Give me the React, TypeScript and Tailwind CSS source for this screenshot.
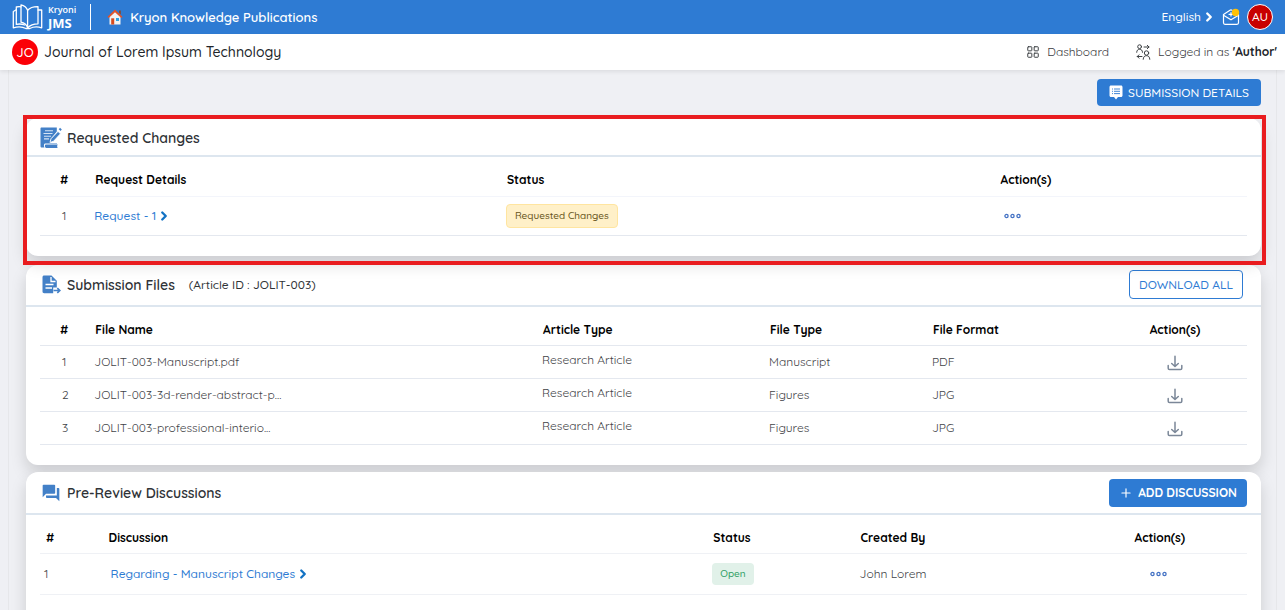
import { type ReactNode } from "react";
import { ChevronRight, LayoutGrid, Plus } from "lucide-react";
import { MdForum } from "react-icons/md";

function LogoIcon() {
  return (
    <svg viewBox="0 0 32 26" className="h-[26px] w-8 shrink-0" fill="none" stroke="#fff" strokeWidth="1.3" strokeLinejoin="round" strokeLinecap="round" aria-hidden="true">
      <path d="M9 .8v17.400c3.600.8 5.600 2.700 6.600 5.600V6.200C14.600 3.400 12.600 1.500 9 .8z" />
      <path d="M15.600 6.200c2.400-2.700 5.600-3.700 10.400-3.600v17.200c-4.600 0-7.800 1.200-10.400 4" />
      <path d="M9 2.800C7 2.600 5.600 2.700 4.300 3v17.400c3-.7 5.800-.4 8.300.6" />
      <path d="M4.300 5.800 1.300 7.500v16.300c4.700-1.300 9-1.200 12.600.7h3.800c3.600-1.800 7.700-2 12-.7V6h-3.600" />
    </svg>
  );
}

function HouseIcon() {
  return (
    <svg viewBox="0 0 16 16" className="size-4" aria-hidden="true">
      <path d="M2.500 7.500 8 2.500l5.500 5V15.500h-11z" fill="#f2f2f2" />
      <path d="M12 1.500h1.800v4L12 4z" fill="#8a4a2a" />
      <path d="M8 .5.500 7.800l1.200 1.200L8 3.200 14.300 9l1.200-1.200z" fill="#e0542a" />
      <path d="M4.200 9.300h3v6.200h-3z" fill="#d5491d" />
      <path d="M9 9h3v3H9z" fill="#2aa3e6" />
    </svg>
  );
}

function MailIcon() {
  return (
    <svg viewBox="0 0 18 18" className="size-[18px]" fill="none" stroke="#fff" strokeWidth="1.200" strokeLinejoin="round" strokeLinecap="round" aria-hidden="true">
      <path d="M1.500 6.500v8.300c0 .9.600 1.500 1.500 1.500h12c.9 0 1.500-.6 1.500-1.500V6.500" />
      <path d="M1.500 7.200 9 11.800l7.500-4.600" />
      <path d="M1.500 6.500 8 2.300c.6-.4 1.400-.4 2 0" />
      <path d="M7 6.300h4M9 4.500v3.600" />
      <circle cx="13.500" cy="4.500" r="3.700" fill="#ffc107" stroke="none" />
    </svg>
  );
}

function SwitchUserIcon() {
  return (
    <svg viewBox="0 0 15 16" className="h-4 w-[15px]" fill="none" stroke="#3c4043" strokeWidth="1" strokeLinejoin="round" strokeLinecap="round" aria-hidden="true">
      <circle cx="3.600" cy="2.700" r="1.900" />
      <path d="M.7 8.300c0-2 1.200-3 2.900-3s2.900 1 2.900 3" />
      <circle cx="10.500" cy="9" r="2.200" />
      <path d="M7.200 15.300c.1-2.500 1.400-3.600 3.300-3.600s3.200 1.100 3.300 3.600" />
      <path d="M8 3h5M11.300 1.300 13 3l-1.700 1.700M6 12.500H1.300M3 10.800l-1.700 1.700L3 14.200" />
    </svg>
  );
}

function NoteIcon() {
  return (
    <svg viewBox="0 0 14 15" className="h-[15px] w-3.5" aria-hidden="true">
      <path d="M2 .5h10c.9 0 1.500.6 1.500 1.500v8.600c0 .9-.6 1.500-1.500 1.500H9L7 14.500l-2-2.400H2c-.9 0-1.500-.6-1.500-1.500V2C.5 1.100 1.100.5 2 .5z" fill="#fff" />
      <path d="M3 4h1M5 4h6M3 6.300h1M5 6.300h6M3 8.600h1M5 8.600h6" stroke="#2e7bd3" strokeWidth=".9" />
    </svg>
  );
}

function RequestIcon() {
  return (
    <svg viewBox="0 0 22 22" className="size-[22px]" aria-hidden="true">
      <path d="M1.500.5h15.300v4L11 12v4h6v.5H4.800c-1 .8-1.200 2.500-.3 4H1.800C1 20.500.5 20 .5 19V1.500c0-.6.4-1 1-1z" fill="#4380c7" />
      <path d="M5.500 17.500h12.300c-.8 1-.8 2-.2 3.500H6c-1.300-.8-1.500-2.600-.5-3.500z" fill="#4380c7" />
      <path d="M5 3.800h8M3.500 6.500h9M4 9.200h7M4 11.900h5" stroke="#d6e4f5" strokeWidth="1.100" />
      <path d="m10 15.500 1-3.800 7-7.300 2.500 2.400-7 7.500z" fill="#4380c7" stroke="#fff" strokeWidth=".9" />
      <path d="m18.700 2.300 1.400-1.500 1.700 1.600-1.300 1.500z" fill="#4380c7" />
    </svg>
  );
}

function FileExportIcon() {
  return (
    <svg viewBox="0 0 19 19" className="size-[19px]" aria-hidden="true">
      <path d="M2.200.5h7.300l5.300 5.300v6.700h-3.600v5.800h-9C1.200 18.300.5 17.600.5 16.600V2.200C.5 1.200 1.200.5 2.200.5z" fill="#4380c7" />
      <path d="M9 2v4.500h4.500M3.500 9.500h8M3.500 13h6.500" fill="none" stroke="#fff" strokeWidth="1.300" />
      <path d="M11.500 15.500h6M15.300 13.200l2.500 2.300-2.500 2.300" fill="none" stroke="#4380c7" strokeWidth="1.600" />
    </svg>
  );
}

function DownloadIcon() {
  return (
    <svg viewBox="0 0 16 16" className="size-4" fill="none" stroke="#7b8798" strokeWidth="1.500" strokeLinecap="round" strokeLinejoin="round" aria-hidden="true">
      <path d="M8 1.300v10M4.700 8.500 8 11.500l3.300-3M1.200 10.500v2.700c0 .8.500 1.300 1.300 1.300h11c.8 0 1.300-.5 1.300-1.300v-2.700" />
    </svg>
  );
}

function MoreButton() {
  return (
    <button type="button" aria-label="More actions" className="block">
      <svg viewBox="0 0 17 6" className="h-1.5 w-[17px]" fill="none" stroke="#4472c4" strokeWidth="1.300">
        <circle cx="2.500" cy="3" r="1.600" />
        <circle cx="8.500" cy="3" r="1.600" />
        <circle cx="14.500" cy="3" r="1.600" />
      </svg>
    </button>
  );
}

function RowLink({ href, children }: { href: string; children: ReactNode }) {
  return (
    <a href={href} className="flex items-center gap-px font-medium text-[#2e7bd3]">
      {children}
      <ChevronRight className="size-3.5 text-[#1272c4]" strokeWidth={4} />
    </a>
  );
}

function Card({ icon, title, note, action, head, className, children }: {
  icon: ReactNode;
  title: string;
  note?: string;
  action?: ReactNode;
  head: string;
  className: string;
  children: ReactNode;
}) {
  return (
    <section className={`rounded-xl bg-white shadow-[0_8px_16px_rgba(0,0,0,0.15)] ${className}`}>
      <header className={`flex items-center border-b-2 border-[#dde6ef] px-3.5 ${head}`}>
        <span className="mr-[5px] flex w-[22px] justify-center text-[#4380c7]">{icon}</span>
        <h2 className="text-sm font-semibold text-[#2f3337]">{title}</h2>
        {note && <span className="ml-3.5 font-medium text-[#2f3337]">{note}</span>}
        {action && <div className="ml-auto">{action}</div>}
      </header>
      <div className="px-3.5">{children}</div>
    </section>
  );
}

const th = "p-0 pt-2 pl-px text-left font-bold text-black";
const thNumber = "p-0 pt-2 pl-5 text-left font-bold text-black";
const files = [
  ["JOLIT-003-Manuscript.pdf", "Manuscript", "PDF"],
  ["JOLIT-003-3d-render-abstract-p...", "Figures", "JPG"],
  ["JOLIT-003-professional-interio...", "Figures", "JPG"],
];

export default function App() {
  return (
    <div className="h-screen overflow-hidden bg-[#eff0f4] font-['Quicksand','Lato',sans-serif] text-xs leading-5 font-normal text-[#3f4347]">
      <div className="flex h-[34px] items-center bg-[#2e7bd3] px-3 text-white">
        <LogoIcon />
        <div className="ml-1 font-['Open_Sans',sans-serif]">
          <div className="text-[9px] leading-3 font-semibold">Kryoni</div>
          <div className="text-[13px] leading-[14px] font-bold">JMS</div>
        </div>
        <div className="mr-4 ml-3.5 h-[26px] w-px bg-white" />
        <a href="#home" className="flex items-center gap-[7px] text-[13px] font-semibold"><HouseIcon />Kryon Knowledge Publications</a>
        <button type="button" className="ml-auto flex items-center gap-px font-medium">English <ChevronRight className="size-3.5" strokeWidth={4} /></button>
        <button type="button" aria-label="Messages" className="ml-1.5"><MailIcon /></button>
        <button type="button" className="ml-[7px] flex size-[26px] items-center justify-center rounded-full border border-white bg-[#c80000] text-xs font-medium">AU</button>
      </div>
      <div className="relative flex h-9 items-center bg-white pr-2 pl-3 text-[#3c4043] shadow-[0_2px_4px_rgba(0,0,0,0.08)]">
        <span className="flex size-[26px] items-center justify-center rounded-full bg-[#fb0007] text-[13px] font-medium text-white">JO</span>
        <h1 className="ml-1.5 text-sm font-medium text-[#212529]">Journal of Lorem Ipsum Technology</h1>
        <a href="#dashboard" className="ml-auto flex items-center gap-[7px]"><LayoutGrid className="size-3.5" strokeWidth={1.7} />Dashboard</a>
        <a href="#account" className="ml-[27px] flex items-center gap-[7px]"><SwitchUserIcon /><span>Logged in as <b className="text-[#212529]">'Author'</b></span></a>
      </div>
      <main className="mx-2 border-x border-[#e6e7ea] pt-[9px] pr-[15px] pl-[17px]">
        <div className="flex justify-end">
          <button type="button" className="flex h-[27px] w-[164px] items-center justify-center gap-[5px] rounded bg-[#2e7bd3] font-medium text-white"><NoteIcon />SUBMISSION DETAILS</button>
        </div>

        <div className="relative mt-3">
          <div className="pointer-events-none absolute -top-[3px] -right-[5px] -bottom-[9px] -left-[3px] border-4 border-[#e91c1f]" />
          <Card icon={<RequestIcon />} title="Requested Changes" head="h-[39px] pt-0.5" className="pb-5">
            <table className="w-full table-fixed">
              <colgroup><col className="w-[4.500%]" /><col className="w-[34.100%]" /><col className="w-[40.900%]" /><col /></colgroup>
              <thead><tr className="h-[39px] border-b border-[#f3f5fb]"><th className={thNumber}>#</th>{["Request Details", "Status", "Action(s)"].map((h) => <th key={h} className={th}>{h}</th>)}</tr></thead>
              <tbody><tr className="h-[39px] border-b border-[#e4e8ef]">
                <td className="pl-[22px]">1</td>
                <td><RowLink href="#request-1">Request - 1</RowLink></td>
                <td><span className="inline-block rounded border border-[#ffe5a0] bg-[#fff0c8] px-2 text-[10px] leading-[22px] font-medium text-[#66541a]">Requested Changes</span></td>
                <td className="pl-1"><MoreButton /></td>
              </tr></tbody>
            </table>
          </Card>
        </div>

        <Card
          icon={<FileExportIcon />}
          title="Submission Files"
          note="(Article ID : JOLIT-003)"
          head="h-[42px]"
          className="mt-[9px] pb-5"
          action={<button type="button" className="mr-1 h-[29px] w-[114px] rounded border border-[#2e7bd3] font-medium text-[#2e7bd3]">DOWNLOAD ALL</button>}
        >
          <table className="w-full table-fixed">
            <colgroup><col className="w-[4.500%]" /><col className="w-[37.100%]" /><col className="w-[18.800%]" /><col className="w-[13.500%]" /><col className="w-[14%]" /><col /></colgroup>
            <thead><tr className="h-[39px] border-b border-[#e4e8ef]">
              <th className={thNumber}>#</th>
              {["File Name", "Article Type", "File Type", "File Format"].map((h) => <th key={h} className={th}>{h}</th>)}
              <th className="pt-2 pl-0.5 text-center font-bold text-black">Action(s)</th>
            </tr></thead>
            <tbody>{files.map(([name, type, format], i) => (
              <tr key={name} className="h-[33px] border-b border-[#e4e8ef]">
                <td className="pl-[22px]">{i + 1}</td><td>{name}</td><td className="pb-1">Research Article</td><td>{type}</td><td>{format}</td>
                <td className="pt-0.5 pl-0.5"><button type="button" aria-label={`Download ${name}`} className="mx-auto block"><DownloadIcon /></button></td>
              </tr>
            ))}</tbody>
          </table>
        </Card>

        <Card
          icon={<MdForum className="size-5" />}
          title="Pre-Review Discussions"
          head="h-[43px]"
          className="mt-[7px] pb-10"
          action={<button type="button" className="flex h-7 w-[138px] items-center justify-center gap-[5px] rounded bg-[#2e7bd3] font-bold text-white"><Plus className="size-3.5" strokeWidth={2} />ADD DISCUSSION</button>}
        >
          <table className="w-full table-fixed">
            <colgroup><col className="w-[5.600%]" /><col className="w-[50.100%]" /><col className="w-[12.200%]" /><col className="w-[22.700%]" /><col /></colgroup>
            <thead><tr className="h-[38px] border-b border-[#eff1f5]"><th className="p-0 pt-2 pl-1.5 text-left font-bold text-black">#</th>{["Discussion", "Status", "Created By", "Action(s)"].map((h) => <th key={h} className={th}>{h}</th>)}</tr></thead>
            <tbody><tr className="h-[41px] border-b border-[#eff1f5]">
              <td className="pl-1">1</td>
              <td className="pl-[3px]"><RowLink href="#discussion-1">Regarding - Manuscript Changes</RowLink></td>
              <td><span className="inline-block rounded bg-[#e1f1e9] px-2 text-[10px] leading-[22px] font-medium text-[#2e9e63]">Open</span></td>
              <td>John Lorem</td>
              <td className="pl-4"><MoreButton /></td>
            </tr></tbody>
          </table>
        </Card>
      </main>
    </div>
  );
}
